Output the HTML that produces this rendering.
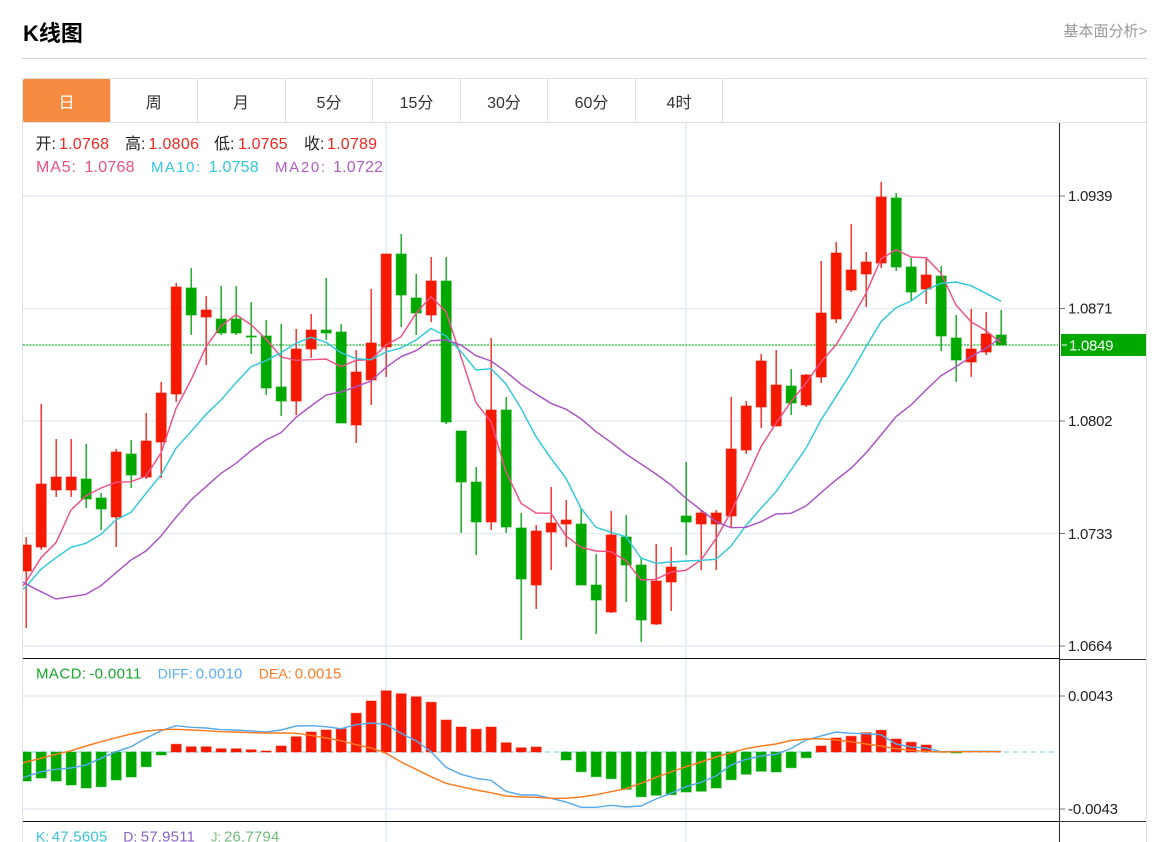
<!DOCTYPE html>
<html><head><meta charset="utf-8"><title>K线图</title>
<style>
html,body{margin:0;padding:0;background:#fff;width:1166px;height:842px;overflow:hidden}
svg{display:block;position:absolute;left:0;top:0}
text{font-family:"Liberation Sans","Noto Sans CJK SC",sans-serif}
.a{font-size:15px;fill:#222}
.t{font-size:16px;fill:#333;text-anchor:middle}
.f16{font-size:16px}.f15{font-size:15px}.f14{font-size:14px}
</style></head><body>
<svg width="1166" height="842" viewBox="0 0 1166 842" xmlns="http://www.w3.org/2000/svg">
<defs><clipPath id="c"><rect x="23" y="123" width="1036" height="719"/></clipPath></defs>
<text x="23" y="41" style="font-size:22px;font-weight:bold" fill="#000">K线图</text>
<text x="1063.5" y="36" style="font-size:15px" fill="#999">基本面分析&gt;</text>
<path d="M22 58.5H1147" stroke="#d2d2d2" fill="none"/>

<path d="M22.5 78.5H1146.5M22.5 78V842M1146.5 78V842M23 122.5H1146" stroke="#dfdfdf" fill="none"/>
<rect x="23" y="79" width="87.5" height="43" rx="2" fill="#f48b41"/>
<path d="M110.5 79V122M197.5 79V122M285.5 79V122M372.5 79V122M460.5 79V122M547.5 79V122M635.5 79V122M722.5 79V122" stroke="#dfdfdf" fill="none"/>
<text class="t" x="66.5" y="108" style="fill:#fff">日</text>
<text class="t" x="153.8" y="108">周</text>
<text class="t" x="241" y="108">月</text>
<text class="t" x="329" y="108">5分</text>
<text class="t" x="416.5" y="108">15分</text>
<text class="t" x="504" y="108">30分</text>
<text class="t" x="591.5" y="108">60分</text>
<text class="t" x="679" y="108">4时</text>

<g stroke="#e3ecf2" stroke-width="1.6" fill="none">
<path d="M23 196H1059M23 308.5H1059M23 421H1059M23 533.5H1059M23 646H1059M23 696H1059M23 809H1059"/>
<path d="M386 123V842M686 123V842"/>
</g>
<path d="M23 345H1058" stroke="#3cb94a" stroke-width="1.5" stroke-dasharray="2 1.2" fill="none"/>

<g clip-path="url(#c)">
<g transform="translate(.2 0)">
<path fill="none" stroke="#f5261c" stroke-width="1.4" d="M26 537V628M41 404V550M56 439V497M71 439V497M116 449V547M146 413V479M161 382V478M176 283V402M206 296V365M296 329V415M311 314V358M356 350V443M371 289V405M386 254V377M431 257V322M491 338V530M536 525V609M551 487V570M566 500V547M611 511V613M656 544V625M671 547V611M701 510V570M716 510V570M731 397V528M746 401V454M761 354V428M776 350V426M806 374V407M821 261V383M836 242V323M851 224V292M866 252V307M881 182V268M926 257V304M971 309V377M986 312V355"/>
<path fill="none" stroke="#0eaa1c" stroke-width="1.4" d="M86 444V508M101 493V530M131 440V488M191 268V335M221 286V335M236 286V335M251 302V354M266 320V395M281 324V416M326 278V340M341 324V423M401 234V327M416 274V335M446 257V424M461 431V533M476 467V555M506 397V533M521 513V640M581 508V585M596 554V634M626 515V602M641 558V642M686 462V555M791 369V415M896 193V271M911 258V301M941 266V351M956 315V382M1001 310V345"/>
<path fill="#f51900" stroke="#f51900" stroke-opacity=".65" d="M21 545h10V571h-10zM36 484h10V547h-10zM51 477h10V490h-10zM66 477h10V490h-10zM111 452h10V517h-10zM141 441h10V477h-10zM156 393h10V442h-10zM171 287h10V394h-10zM201 310h10V317h-10zM291 349h10V401h-10zM306 330h10V349h-10zM351 372h10V425h-10zM366 343h10V380h-10zM381 254h10V347h-10zM426 281h10V315h-10zM486 410h10V522h-10zM531 531h10V585h-10zM546 523h10V532h-10zM561 520h10V524h-10zM606 535h10V612h-10zM651 581h10V624h-10zM666 567h10V582h-10zM696 513h10V524h-10zM711 513h10V524h-10zM726 449h10V516h-10zM741 406h10V450h-10zM756 361h10V407h-10zM771 385h10V426h-10zM801 375h10V405h-10zM816 313h10V377h-10zM831 253h10V319h-10zM846 270h10V290h-10zM861 262h10V274h-10zM876 197h10V263h-10zM921 275h10V289h-10zM966 349h10V362h-10zM981 334h10V352h-10z"/>
<path fill="#00a800" stroke="#00a800" stroke-opacity=".65" d="M81 479h10V499h-10zM96 498h10V509h-10zM126 454h10V475h-10zM186 288h10V315h-10zM216 319h10V333h-10zM231 319h10V333h-10zM246 336h10V337h-10zM261 336h10V388h-10zM276 387h10V401h-10zM321 330h10V333h-10zM336 332h10V423h-10zM396 254h10V295h-10zM411 298h10V313h-10zM441 281h10V422h-10zM456 431h10V482h-10zM471 482h10V522h-10zM501 410h10V527h-10zM516 528h10V579h-10zM576 524h10V585h-10zM591 585h10V600h-10zM621 537h10V565h-10zM636 565h10V620h-10zM681 516h10V522h-10zM786 386h10V403h-10zM891 198h10V267h-10zM906 267h10V292h-10zM936 276h10V336h-10zM951 338h10V360h-10zM996 335h10V345h-10z"/>
</g>

<polyline fill="none" stroke="#ee4f87" stroke-width="1.45" points="23,586 26,581.7 41,557.7 56,542.7 71,510 86,495.7 101,488 116,482.3 131,481.7 146,476 161,453 176,408.5 191,380 206,346.7 221,326 236,314.7 251,324.7 266,339 281,357 296,360.3 311,359.7 326,359 341,366.7 356,360.3 371,359.7 386,345 401,336.7 416,313.3 431,296.7 446,311.7 461,356.7 476,402.7 491,421.7 506,471.7 521,503.3 536,513 551,513.3 566,536 581,547.3 596,551 611,551.7 626,560.7 641,580 656,579.3 671,572 686,570.3 701,560 716,538.7 731,512 746,480 761,446.7 776,423.3 791,401.7 806,383 821,362 836,345 851,320 866,293.3 881,259 896,249.7 911,257 926,257.7 941,273.3 956,305 971,321.7 986,330.7 1001,343"/>
<polyline fill="none" stroke="#2fc9dc" stroke-width="1.45" points="23,589 26,586.7 41,569.3 56,557.7 71,547.3 86,543.3 101,534.3 116,520 131,512.3 146,493.3 161,475 176,448.3 191,431.7 206,414.3 221,400 236,382.7 251,366.7 266,360.7 281,352.7 296,343.3 311,337.3 326,342.3 341,352.7 356,358.7 371,359.7 386,352 401,348 416,340 431,328.5 446,336 461,351.7 476,370 491,368.7 506,384 521,408.3 536,436.7 551,458.3 566,478.3 581,508.3 596,527.3 611,532.3 626,536.7 641,558 656,563.3 671,562 686,561 701,560.3 716,559.3 731,546 746,525.5 761,508.3 776,491.7 791,470 806,448.3 821,420 836,396.7 851,373 866,346.7 881,321.7 896,307.7 911,301 926,290 941,283.3 956,282 971,285.7 986,293.3 1001,301.3"/>
<polyline fill="none" stroke="#ab52c7" stroke-width="1.45" points="23,582 26,584 41,591.7 56,599 71,596.7 86,594.3 101,585.7 116,572.7 131,560 146,551 161,536 176,517.3 191,500 206,486.7 221,473.3 236,463.3 251,450.7 266,440 281,432.7 296,417.3 311,406 326,395 341,392 356,386.7 371,381 386,367.3 401,356.7 416,350.7 431,340.7 446,340 461,345 476,355.7 491,361 506,371.7 521,384.3 536,394 551,403.3 566,409.3 581,418.7 596,431.7 611,442.3 626,454 641,464 656,474 671,485 686,498.3 701,510 716,521.7 731,527.7 746,527.3 761,521.7 776,514 791,513.3 806,506 821,492.7 836,480 851,468.3 866,453 881,435 896,416.7 911,405 926,390 941,375.7 956,366.7 971,356.7 986,348.3 1001,337.3"/>

<path d="M23 752H1056" stroke="#a5dcef" stroke-width="1.4" stroke-dasharray="5 4" fill="none"/>
<g transform="translate(.2 0)">
<path fill="#00a800" stroke="#00a800" stroke-opacity=".5" d="M21 752h10V781h-10zM36 752h10V778h-10zM51 752h10V781h-10zM66 752h10V785h-10zM81 752h10V788h-10zM96 752h10V786.7h-10zM111 752h10V780h-10zM126 752h10V777h-10zM141 752h10V766.7h-10zM156 752h10V755h-10zM561 752h10V760h-10zM576 752h10V771.7h-10zM591 752h10V776.7h-10zM606 752h10V778.7h-10zM621 752h10V789.3h-10zM636 752h10V796.7h-10zM651 752h10V795.3h-10zM666 752h10V794.7h-10zM681 752h10V792h-10zM696 752h10V791.3h-10zM711 752h10V788h-10zM726 752h10V779.7h-10zM741 752h10V774.3h-10zM756 752h10V771.3h-10zM771 752h10V772h-10zM786 752h10V767.7h-10zM801 752h10V757.7h-10zM951 752h10V753h-10z"/>
<path fill="#f51900" stroke="#f51900" stroke-opacity=".5" d="M171 744.3h10V752h-10zM186 746.7h10V752h-10zM201 746.7h10V752h-10zM216 748.7h10V752h-10zM231 748.7h10V752h-10zM246 749.7h10V752h-10zM261 751h10V752h-10zM276 746h10V752h-10zM291 736.7h10V752h-10zM306 732h10V752h-10zM321 730h10V752h-10zM336 728.7h10V752h-10zM351 713.3h10V752h-10zM366 701h10V752h-10zM381 690.7h10V752h-10zM396 693.7h10V752h-10zM411 696.7h10V752h-10zM426 702.3h10V752h-10zM441 720h10V752h-10zM456 727h10V752h-10zM471 729.3h10V752h-10zM486 727h10V752h-10zM501 742.7h10V752h-10zM516 747.7h10V752h-10zM531 747h10V752h-10zM816 746h10V752h-10zM831 738h10V752h-10zM846 736.3h10V752h-10zM861 732.7h10V752h-10zM876 730.3h10V752h-10zM891 739h10V752h-10zM906 742.3h10V752h-10zM921 745h10V752h-10z"/>
</g>
<polyline fill="none" stroke="#55aaee" stroke-width="1.45" points="23,777.7 26,776.7 41,771.7 56,769.3 71,768 86,765 101,758.3 116,751.7 131,746.7 146,738.3 161,730.7 176,725.7 191,727.3 206,728 221,729.7 236,730 251,731 266,732 281,730 296,726 311,725.7 326,726.7 341,728.7 356,724.7 371,723 386,724.3 401,733.3 416,740.7 431,751.7 446,767.3 461,774.3 476,778.3 491,780.3 506,791.3 521,795 536,795 551,798.3 566,802 581,807.3 596,807.3 611,805.3 626,807 641,806 656,799 671,793.3 686,786.7 701,782.3 716,776 731,765 746,759.3 761,756 776,754.3 791,748.5 806,740 821,736 836,732 851,733.3 866,733.7 881,734.7 896,744 911,747 926,748 941,751.7 956,751.5 971,751.3 986,751.3 1001,751.5"/>
<polyline fill="none" stroke="#ff7a1e" stroke-width="1.45" points="23,763 26,762 41,758.3 56,754.3 71,750.7 86,746 101,741.7 116,737.7 131,734 146,731 161,729.7 176,729.3 191,730 206,730.7 221,731.7 236,732 251,732.7 266,733 281,733 296,733.3 311,735.3 326,738 341,740.7 356,744.7 371,748 386,753.3 401,762 416,769.3 431,776.7 446,783.3 461,786.7 476,790 491,792.7 506,796 521,797 536,797.3 551,798.3 566,798.3 581,797 596,794.7 611,791.7 626,788.7 641,783.3 656,777.3 671,772 686,766.7 701,762 716,757 731,752.7 746,748.7 761,746 776,744 791,740.5 806,739 821,738.7 836,740 851,741.7 866,744 881,746 896,748.7 911,750.3 926,751.3 941,752 956,751.8 971,751.7 986,751.7 1001,751.7"/>
</g>

<path d="M23 658.5H1059M23 821.5H1059" stroke="#111" stroke-width="1.1" fill="none"/>
<path d="M1059 659.5H1146M1059 821.5H1146" stroke="#333" stroke-width="1.1" fill="none"/>
<path d="M1059.5 123V842" stroke="#333" stroke-width="1.1" fill="none"/>
<path d="M1060 196H1065M1060 308.5H1065M1060 421H1065M1060 533.5H1065M1060 646H1065M1060 696H1065M1060 809H1065" stroke="#777" fill="none"/>

<rect x="1061" y="334" width="85" height="22" fill="#00a800"/>
<path d="M1062 345H1067" stroke="#fff" fill="none"/>
<text class="a" x="1068" y="201" textLength="44.5">1.0939</text>
<text class="a" x="1068" y="313.5" textLength="44.5">1.0871</text>
<text class="a" x="1069" y="350.5" textLength="44.5" style="fill:#fff">1.0849</text>
<text class="a" x="1068" y="426" textLength="44.5">1.0802</text>
<text class="a" x="1068" y="539" textLength="44.5">1.0733</text>
<text class="a" x="1068" y="651" textLength="44.5">1.0664</text>
<text class="a" x="1068" y="701" textLength="45">0.0043</text>
<text class="a" x="1068" y="814" textLength="50">-0.0043</text>

<text class="f16" x="35.5" y="149" fill="#222">开:</text>
<text class="f16" x="59" y="149" fill="#f5261f" textLength="50">1.0768</text>
<text class="f16" x="125" y="149" fill="#222">高:</text>
<text class="f16" x="148.5" y="149" fill="#f5261f" textLength="50.5">1.0806</text>
<text class="f16" x="214" y="149" fill="#222">低:</text>
<text class="f16" x="238" y="149" fill="#f5261f" textLength="49.5">1.0765</text>
<text class="f16" x="304" y="149" fill="#222">收:</text>
<text class="f16" x="327" y="149" fill="#f5261f" textLength="50">1.0789</text>

<text class="f16" x="36" y="172" fill="#ee4f87" textLength="40">MA5:</text>
<text class="f16" x="84.5" y="172" fill="#ee4f87" textLength="50">1.0768</text>
<text class="f15" x="151" y="172" fill="#2fc9dc" textLength="49">MA10:</text>
<text class="f16" x="208.7" y="172" fill="#2fc9dc" textLength="50">1.0758</text>
<text class="f15" x="275" y="172" fill="#b35cc9" textLength="50">MA20:</text>
<text class="f16" x="333" y="172" fill="#b35cc9" textLength="50">1.0722</text>

<text class="f15" x="36" y="678.5" fill="#14a92b" textLength="50">MACD:</text>
<text class="f15" x="89.3" y="678.5" fill="#14a92b" textLength="52">-0.0011</text>
<text class="f14" x="157.7" y="678.5" fill="#5aaef5" textLength="35">DIFF:</text>
<text class="f15" x="195.7" y="678.5" fill="#5aaef5" textLength="46.6">0.0010</text>
<text class="f14" x="258.7" y="678.5" fill="#ff7a22" textLength="33">DEA:</text>
<text class="f15" x="294.7" y="678.5" fill="#ff7a22" textLength="46.6">0.0015</text>

<text class="f14" x="36" y="841.5" fill="#38c6d8">K:</text>
<text class="f15" x="51.7" y="841.5" fill="#38c6d8" textLength="55.6">47.5605</text>
<text class="f14" x="123.3" y="841.5" fill="#8b60cc">D:</text>
<text class="f15" x="140.7" y="841.5" fill="#8b60cc" textLength="54.3">57.9511</text>
<text x="211" y="841.5" fill="#72bd7d" style="font-size:13px">J:</text>
<text class="f15" x="224" y="841.5" fill="#72bd7d" textLength="55.3">26.7794</text>
</svg>
</body></html>
